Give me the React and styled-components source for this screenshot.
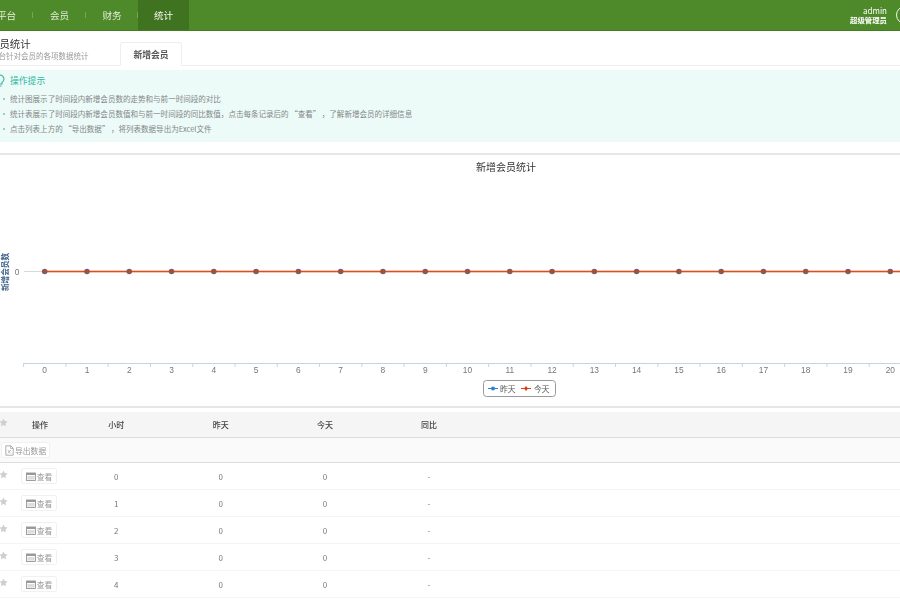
import React from 'react';
import styled, { createGlobalStyle } from 'styled-components';

const Global = createGlobalStyle`
  html, body { margin: 0; padding: 0; width: 900px; height: 600px; overflow: hidden; background: #fff; }
  body { font-family: "Noto Sans CJK SC", "Liberation Sans", sans-serif; color: #555; }
  * { box-sizing: border-box; }
`;
const Page = styled.div`width: 900px; height: 600px; overflow: hidden; filter: blur(0.35px);`;

const Nav = styled.header`
  height: 31px; background: #4f8a2a; border-bottom: 1px solid #447c24;
  display: flex; align-items: stretch; color: #e6efdf; font-size: 9.6px;
`;
const NavList = styled.nav`display: flex; margin-left: -20px; flex: 1;`;
const NavItem = styled.div`
  width: ${p => p.$w}px; display: flex; align-items: center; justify-content: center; position: relative;
  background: ${p => (p.$active ? '#40731f' : 'transparent')};
  color: ${p => (p.$active ? '#f4f8f0' : '#e3eddb')};
  ${p => p.$sep && `&::after { content: ""; position: absolute; right: 0; top: 12px; height: 6px; width: 1px; background: #77a458; }`}
`;
const User = styled.div`
  display: flex; flex-direction: column; align-items: flex-end; color: #fff;
  padding: 6px 0 0; margin-right: 9px;
`;
const UserName = styled.span`font-size: 8px; line-height: 9px;`;
const UserRole = styled.span`font-size: 7.4px; line-height: 10px; font-weight: 700;`;
const Avatar = styled.div`
  width: 18px; height: 18px; border-radius: 50%; border: 1.5px solid #f2f6ee;
  margin: 6px -14px 0 0; flex: none;
`;

const Head = styled.section`
  height: 35px; display: flex; align-items: flex-end; border-bottom: 1px solid #eee;
`;
const TitleBlock = styled.div`
  width: 120px; margin-left: -11px; flex: none; height: 100%; padding-top: 6px;
  display: flex; flex-direction: column; margin-right: 11px;
`;
const Title = styled.div`font-size: 10.4px; line-height: 13px; color: #333;`;
const Sub = styled.div`font-size: 7.5px; line-height: 11px; color: #999; white-space: nowrap; margin-left: -13px;`;
const Tab = styled.div`
  width: 62px; height: 24px; margin-bottom: -1px; background: #fff;
  border: 1px solid #eee; border-bottom-color: #fff; border-radius: 3px 3px 0 0;
  display: flex; align-items: center; justify-content: center;
  font-size: 8.8px; font-weight: 700; color: #555;
`;

const Tips = styled.section`
  margin-top: 4px; height: 72px; background: #edfbf8; padding: 4px 0 0 10px; position: relative;
`;
const TipsTitle = styled.div`font-size: 8.8px; line-height: 14px; color: #2fb89e;`;
const Bulb = styled.svg`position: absolute; left: -5px; top: 4px; width: 10px; height: 13px;`;
const TipList = styled.ul`list-style: none; margin: 3px 0 0; padding: 0;`;
const Tip = styled.li`
  font-size: 7.54px; line-height: 15px; color: #828686; position: relative; white-space: nowrap;
  &::before { content: ""; position: absolute; left: -7px; top: 7px; width: 2px; height: 2px; background: #a9c9c2; }
`;

const Rule = styled.div`height: 2px; background: #e6e6e6;`;
const TipsRule = styled(Rule)`margin-top: 11px;`;
const ChartSvg = styled.svg`display: block; width: 900px; height: 251px;`;

const Table = styled.section`margin-top: 4px;`;
const Row = styled.div`
  display: grid; grid-template-columns: 16px 48px 104.5px 104.5px 104px 104px 1fr; align-items: center;
  text-align: center; height: 27px; border-bottom: 1px solid #f4f4f4; font-size: 8px; color: #777;
`;
const HeadRow = styled(Row)`
  height: 26px; background: #f5f5f5; border-bottom: 1px solid #ddd; color: #444; font-weight: 500;
`;
const ToolRow = styled.div`
  height: 25px; background: #fafafa; border-bottom: 1px solid #ddd; display: flex; align-items: center; padding-left: 1px;
`;
const Btn = styled.button`
  height: 16px; padding: 0 3px; display: inline-flex; align-items: center; gap: 1px;
  background: #fff; border: 1px solid #f1f1f1; border-radius: 2px;
  font: inherit; font-size: 7.8px; color: #999;
`;
const ViewBtn = styled(Btn)`width: 36px; justify-content: center; margin: 0 auto; padding: 0; transform: translateX(-1px);`;
const StarIcon = styled.svg`width: 9px; height: 9px; margin-left: -1px; display: block; transform: translateY(-2px);`;

const Star = () => (
  <StarIcon viewBox="0 0 20 20"><path fill="#cfcfcf" d="M10 1l2.8 5.9 6.4.8-4.7 4.4 1.2 6.4L10 15.4l-5.7 3.1 1.2-6.4L.8 7.7l6.4-.8z" /></StarIcon>
);
const WinIcon = () => (
  <svg width="10" height="9" viewBox="0 0 10 9"><rect x=".5" y="1" width="9" height="7.4" fill="none" stroke="#888" strokeWidth=".8" /><rect x=".5" y="1" width="9" height="2" fill="#999" /><rect x="1.4" y="4" width="7.2" height="3.6" fill="#ddd" /></svg>
);
const FileIcon = () => (
  <svg width="9" height="11" viewBox="0 0 9 11"><path d="M.8.8h5l2.4 2.4v7H.8z" fill="none" stroke="#999" strokeWidth=".8" /><path d="M5.6.8v2.6h2.6M2.8 5l3 3.4M5.8 5l-3 3.4" fill="none" stroke="#999" strokeWidth=".7" /></svg>
);

const step = 42.28;
const x0 = 44.7;
const hours = Array.from({ length: 22 }, (_, i) => i);
const axis = { fontFamily: '"Liberation Sans", sans-serif', fontSize: 8.4, fill: '#777', textAnchor: 'middle' };

const Chart = () => (
  <ChartSvg viewBox="0 -1 900 251">
    <text x="506" y="15" textAnchor="middle" fontSize="10" fill="#333" fontFamily='"Noto Sans CJK SC", sans-serif'>新增会员统计</text>
    <text transform="translate(8 116) rotate(-90)" textAnchor="middle" fontSize="7.6" fontWeight="700" fill="#3d5f8c" fontFamily='"Noto Sans CJK SC", sans-serif'>新增会员数</text>
    <text x="17" y="118.5" {...axis}>0</text>
    <line x1="24" x2="44" y1="115.5" y2="115.5" stroke="#d8d8d8" />
    <line x1="23" x2="900" y1="207.5" y2="207.5" stroke="#c6d4e2" />
    {hours.map(i => <line key={i} x1={23.6 + i * step} x2={23.6 + i * step} y1="207" y2="211" stroke="#c6d4e2" />)}
    <line x1={x0} x2="900" y1="115.5" y2="115.5" stroke="#f0b59b" strokeWidth="2.4" />
    <line x1={x0} x2="900" y1="115.5" y2="115.5" stroke="#d9501e" strokeWidth="1.2" />
    {hours.map(i => (
      <g key={i}>
        <circle cx={x0 + i * step} cy="115.5" r="2.8" fill="#4a6f96" />
        <circle cx={x0 + i * step} cy="115.5" r="2.1" fill="#c9421a" />
      </g>
    ))}
    {hours.map(i => <text key={i} x={x0 + i * step} y="217" {...axis}>{i}</text>)}
    <rect x="483.5" y="224.5" width="72" height="16" rx="3" fill="#fff" stroke="#999" />
    <line x1="488" x2="498" y1="232.5" y2="232.5" stroke="#2f7ed8" />
    <circle cx="493" cy="232.5" r="2" fill="#2f7ed8" />
    <text x="500" y="235.5" fontSize="7.8" fill="#555" fontFamily='"Noto Sans CJK SC", sans-serif'>昨天</text>
    <line x1="521" x2="531" y1="232.5" y2="232.5" stroke="#d9401a" />
    <path d="M526 230l2 2.5-2 2.5-2-2.5z" fill="#d9401a" />
    <text x="534" y="235.5" fontSize="7.8" fill="#555" fontFamily='"Noto Sans CJK SC", sans-serif'>今天</text>
  </ChartSvg>
);

const tips = [
  '统计图展示了时间段内新增会员数的走势和与前一时间段的对比',
  '统计表展示了时间段内新增会员数值和与前一时间段的同比数值，点击每条记录后的\u2009“查看”\u2009，了解新增会员的详细信息',
  '点击列表上方的\u2009“导出数据”\u2009，将列表数据导出为Excel文件',
];

export default function App() {
  return (
    <Page lang="zh-CN">
      <Global />
      <Nav>
        <NavList>
          <NavItem $w={53} $sep>平台</NavItem>
          <NavItem $w={53} $sep>会员</NavItem>
          <NavItem $w={52} $sep>财务</NavItem>
          <NavItem $w={51} $active>统计</NavItem>
        </NavList>
        <User>
          <UserName>admin</UserName>
          <UserRole>超级管理员</UserRole>
        </User>
        <Avatar />
      </Nav>
      <Head>
        <TitleBlock>
          <Title>会员统计</Title>
          <Sub>网站平台针对会员的各项数据统计</Sub>
        </TitleBlock>
        <Tab>新增会员</Tab>
      </Head>
      <Tips>
        <Bulb viewBox="0 0 10 13"><path d="M5 1a4 4 0 0 0-2 7.4V10h4V8.4A4 4 0 0 0 5 1zM3.5 12h3" fill="none" stroke="#2fb89e" strokeWidth="1.1" /></Bulb>
        <TipsTitle>操作提示</TipsTitle>
        <TipList>{tips.map(t => <Tip key={t}>{t}</Tip>)}</TipList>
      </Tips>
      <TipsRule />
      <Chart />
      <Rule />
      <Table>
        <HeadRow><Star /><span>操作</span><span>小时</span><span>昨天</span><span>今天</span><span>同比</span><span /></HeadRow>
        <ToolRow><Btn><FileIcon />导出数据</Btn></ToolRow>
        {[0, 1, 2, 3, 4].map(h => (
          <Row key={h}>
            <Star />
            <span><ViewBtn><WinIcon />查看</ViewBtn></span>
            <span>{h}</span><span>0</span><span>0</span><span>-</span><span />
          </Row>
        ))}
      </Table>
    </Page>
  );
}
